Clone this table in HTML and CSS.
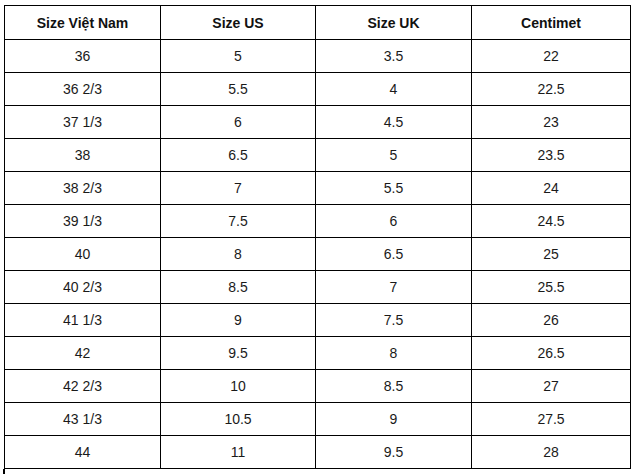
FILE: index.html
```html
<!DOCTYPE html>
<html lang="vi">
<head>
<meta charset="utf-8">
<title>Bảng size giày</title>
<link rel="stylesheet" href="styles.css">
</head>
<body>
<table class="size-table">
  <colgroup>
    <col class="c1"><col class="c2"><col class="c3"><col class="c4">
  </colgroup>
  <thead>
    <tr><th>Size Việt Nam</th><th>Size US</th><th>Size UK</th><th>Centimet</th></tr>
  </thead>
  <tbody>
    <tr><td>36</td><td>5</td><td>3.5</td><td>22</td></tr>
    <tr><td>36 2/3</td><td>5.5</td><td>4</td><td>22.5</td></tr>
    <tr><td>37 1/3</td><td>6</td><td>4.5</td><td>23</td></tr>
    <tr><td>38</td><td>6.5</td><td>5</td><td>23.5</td></tr>
    <tr><td>38 2/3</td><td>7</td><td>5.5</td><td>24</td></tr>
    <tr><td>39 1/3</td><td>7.5</td><td>6</td><td>24.5</td></tr>
    <tr><td>40</td><td>8</td><td>6.5</td><td>25</td></tr>
    <tr><td>40 2/3</td><td>8.5</td><td>7</td><td>25.5</td></tr>
    <tr><td>41 1/3</td><td>9</td><td>7.5</td><td>26</td></tr>
    <tr><td>42</td><td>9.5</td><td>8</td><td>26.5</td></tr>
    <tr><td>42 2/3</td><td>10</td><td>8.5</td><td>27</td></tr>
    <tr><td>43 1/3</td><td>10.5</td><td>9</td><td>27.5</td></tr>
    <tr><td>44</td><td>11</td><td>9.5</td><td>28</td></tr>
  </tbody>
</table>
<div class="next-block"></div>
</body>
</html>
```
FILE: styles.css
```css
html, body {
  margin: 0;
  padding: 0;
  background: #ffffff;
}
body {
  padding: 5px 0 0 4px;
  font-family: "Liberation Sans", Arial, sans-serif;
  color: #1a1a1a;
}
.size-table {
  border-collapse: collapse;
  table-layout: fixed;
  width: 626px;
  border: 1px solid #000;
}
.c1 { width: 156px; }
.c2 { width: 155px; }
.c3 { width: 156px; }
.c4 { width: 159px; }
.size-table th,
.size-table td {
  border: 1px solid #000;
  height: 32px;
  padding: 0;
  text-align: center;
  vertical-align: middle;
  font-size: 14px;
  line-height: 16px;
}
.size-table th {
  font-weight: bold;
  color: #111;
  height: 33px;
}
.next-block {
  width: 626px;
  height: 10px;
  border-left: 2px solid #000;
  margin-left: -1px;
}
```
